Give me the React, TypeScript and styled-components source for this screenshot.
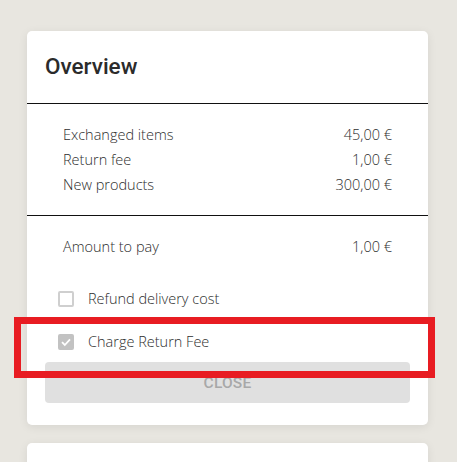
import React from 'react';
import styled, { createGlobalStyle } from 'styled-components';

const GlobalStyle = createGlobalStyle`
  html, body {
    margin: 0;
    padding: 0;
    background: #e8e6e0;
  }
  body {
    font-family: 'Open Sans', 'Liberation Sans', sans-serif;
  }
`;

type Line = { label: string; amount: string };

type checkStyle = {
  checked: boolean;
};

const Page = styled.div`
  position: relative;
  width: 457px;
  height: 462px;
  overflow: hidden;
  padding: 31px 29px 0 27px;
  box-sizing: border-box;
  display: flex;
  flex-direction: column;
  gap: 18px;
`;

const Card = styled.div`
  background: #fff;
  border-radius: 5px;
  box-shadow: 0 2px 10px rgba(0, 0, 0, 0.08);
  display: flex;
  flex-direction: column;
  flex-shrink: 0;
`;

const Header = styled.div`
  height: 72px;
  display: flex;
  align-items: center;
  padding: 0 18px;
  border-bottom: 1px solid #111;
`;

const Title = styled.h2`
  margin: 0;
  font-family: Roboto, 'Liberation Sans', sans-serif;
  font-weight: 500;
  font-size: 22.5px;
  color: #2b2b2b;
  position: relative;
  top: -1px;
`;

const Section = styled.div`
  padding: 18px 36px;
  border-bottom: ${({ last }: { last?: boolean }) => (last ? 'none' : '1px solid #111')};
`;

const Row = styled.div`
  display: flex;
  justify-content: space-between;
  align-items: center;
  height: 25px;
  font-size: 14.5px;
  font-weight: 300;
  color: #2e2e2e;
`;

const Footer = styled.div`
  padding: 0 18px 22px;
  display: flex;
  flex-direction: column;
`;

const Options = styled.div`
  display: flex;
  flex-direction: column;
  gap: 18px;
  padding: 9px 13px 8px;
`;

const OptionRow = styled.label`
  display: flex;
  align-items: center;
  gap: 14px;
  height: 25px;
  font-size: 14.5px;
  font-weight: 300;
  color: #2e2e2e;
`;

const Box = styled.span`
  width: 16px;
  height: 16px;
  box-sizing: border-box;
  border-radius: 2px;
  border: 2px solid ${({ checked }: checkStyle) => (checked ? '#c2c2c2' : '#cfcfcf')};
  background: ${({ checked }: checkStyle) => (checked ? '#c2c2c2' : '#fff')};
  display: flex;
  align-items: center;
  justify-content: center;
`;

const CloseButton = styled.button`
  height: 41px;
  border: none;
  border-radius: 4px;
  background: #e0e0e0;
  color: #a8a8a8;
  font-family: Roboto, 'Liberation Sans', sans-serif;
  font-weight: 500;
  font-size: 15.5px;
  letter-spacing: 0.2px;
  padding-top: 2px;
`;

const NextCard = styled(Card)`
  height: 60px;
`;

const Highlight = styled.div`
  position: absolute;
  left: 14px;
  top: 317px;
  width: 421px;
  height: 61px;
  box-sizing: border-box;
  border: 7px solid #e81c22;
  pointer-events: none;
`;

const items: Line[] = [
  { label: 'Exchanged items', amount: '45,00 €' },
  { label: 'Return fee', amount: '1,00 €' },
  { label: 'New products', amount: '300,00 €' },
];

function Checkbox({ checked, label }: { checked: boolean; label: string }) {
  return (
    <OptionRow>
      <Box checked={checked}>
        {checked && (
          <svg width="12" height="12" viewBox="0 0 12 12">
            <path d="M2 6.2 L4.8 9 L10 3.4" fill="none" stroke="#fff" strokeWidth="1.8" />
          </svg>
        )}
      </Box>
      {label}
    </OptionRow>
  );
}

export default function App() {
  return (
    <>
      <GlobalStyle />
      <Page>
        <Card>
          <Header>
            <Title>Overview</Title>
          </Header>
          <Section>
            {items.map((item) => (
              <Row key={item.label}>
                <span>{item.label}</span>
                <span>{item.amount}</span>
              </Row>
            ))}
          </Section>
          <Section last>
            <Row>
              <span>Amount to pay</span>
              <span>1,00 €</span>
            </Row>
          </Section>
          <Footer>
            <Options>
              <Checkbox checked={false} label="Refund delivery cost" />
              <Checkbox checked label="Charge Return Fee" />
            </Options>
            <CloseButton>CLOSE</CloseButton>
          </Footer>
        </Card>
        <NextCard />
        <Highlight />
      </Page>
    </>
  );
}
